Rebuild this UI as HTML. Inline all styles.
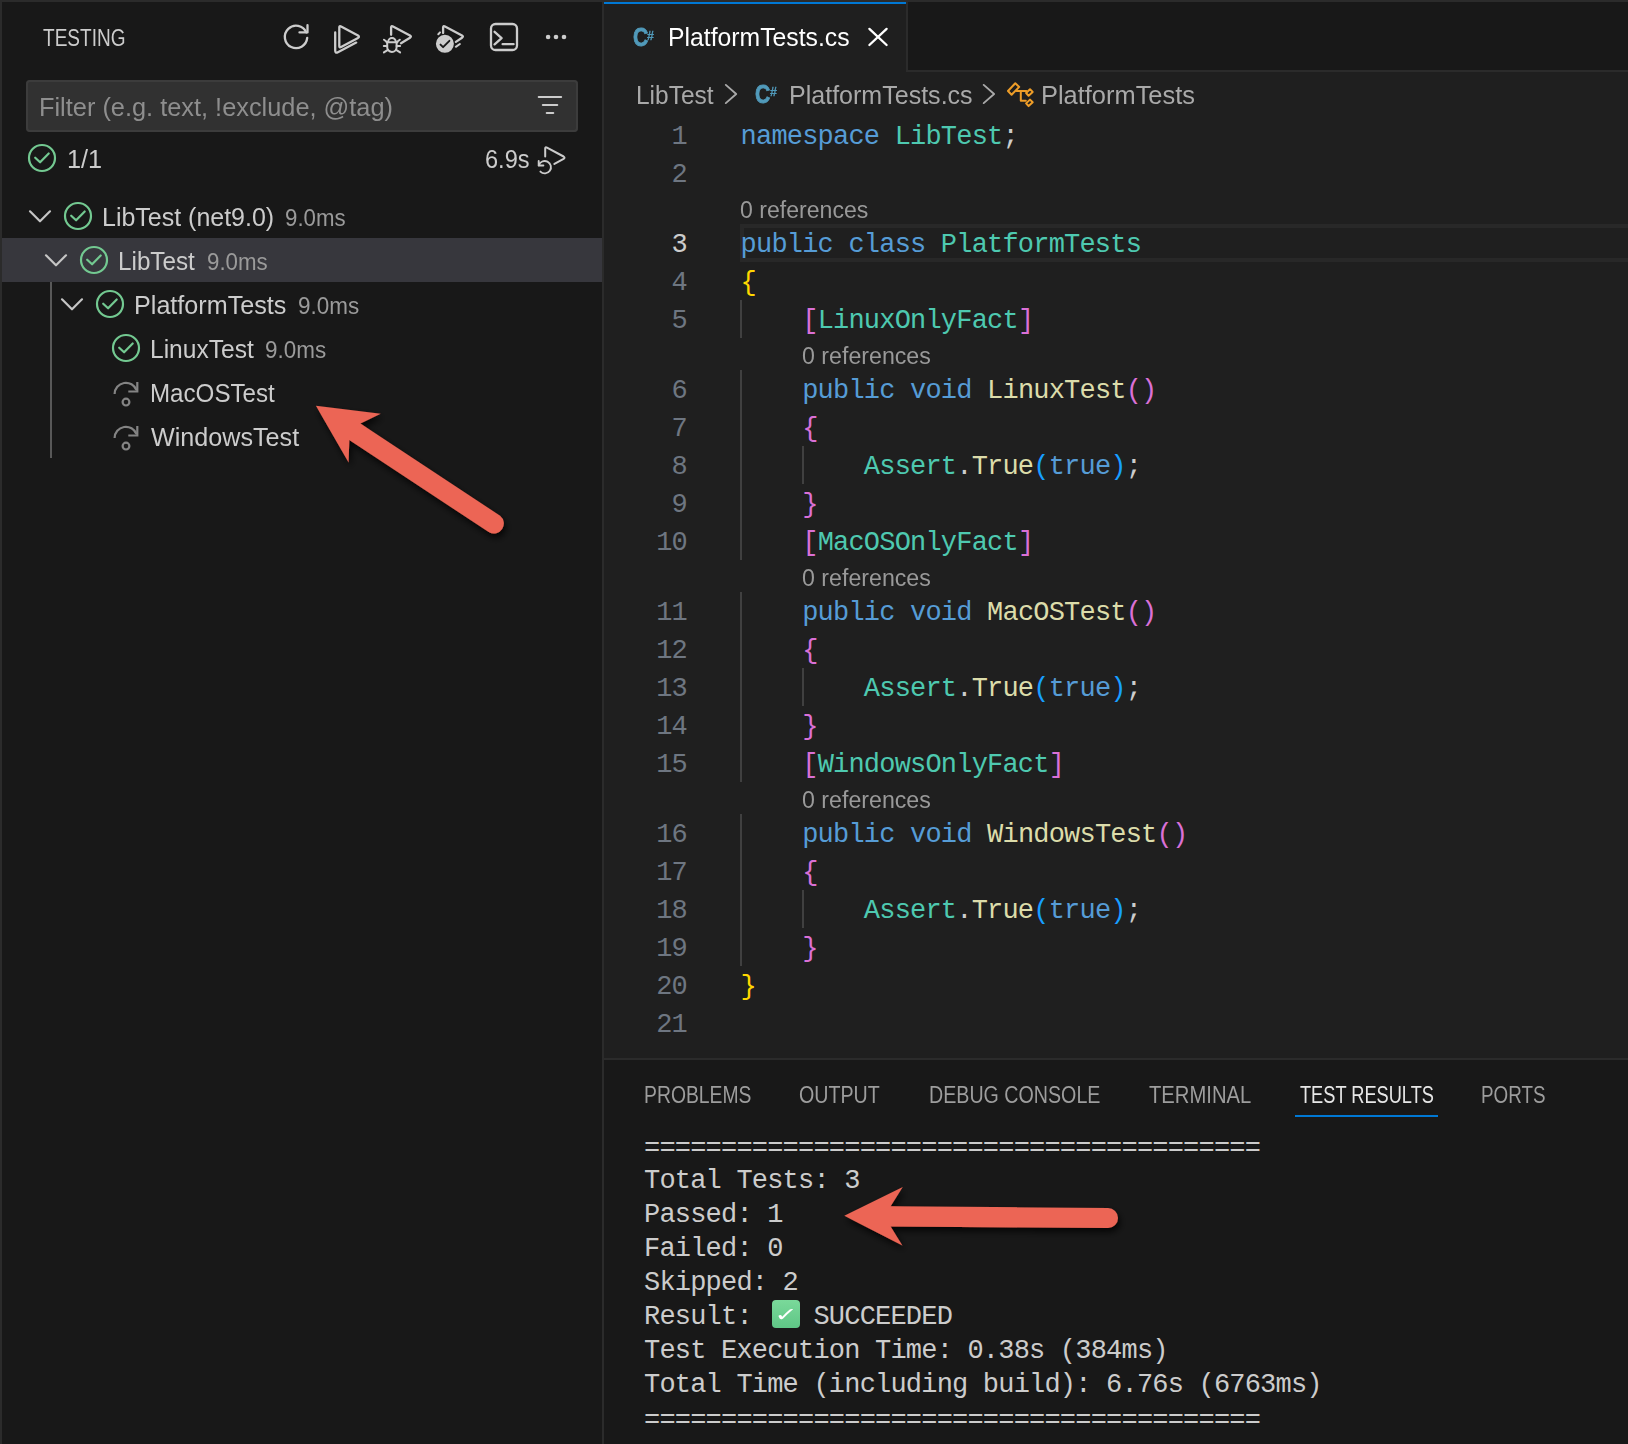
<!DOCTYPE html>
<html lang="en"><head><meta charset="utf-8"><title>Testing - PlatformTests.cs</title>
<style>
html,body{margin:0;padding:0}
body{width:1628px;height:1444px;background:#181818;position:relative;overflow:hidden;font-family:"Liberation Sans",sans-serif;}
div,span.t,svg{position:absolute}
.t{white-space:pre;display:block;transform-origin:0 0}
#bg-top{left:0;top:0;width:1628px;height:2px;background:#2b2b2b}
#bg-left{left:0;top:0;width:2px;height:1444px;background:#2b2b2b}
#sb-border{left:602px;top:2px;width:2px;height:1442px;background:#2b2b2b}
#filter{left:26px;top:80px;width:552px;height:52px;background:#313131;border-radius:4px;box-shadow:inset 0 0 0 2px #3c3c3c}
#rowsel{left:2px;top:238px;width:600px;height:44px;background:#37373d}
#guide{left:50px;top:282px;width:2px;height:176px;background:#585858}
#tabbar{left:604px;top:2px;width:1024px;height:68px;background:#181818;border-bottom:2px solid #2b2b2b}
#tab{left:604px;top:2px;width:302px;height:70px;background:#1f1f1f;border-right:2px solid #2b2b2b;box-sizing:content-box}
#tabtop{left:604px;top:2px;width:302px;height:2px;background:#0078d4}
#editor{left:604px;top:72px;width:1024px;height:986px;background:#1f1f1f}
#curline{left:740px;top:224px;width:888px;height:38px;box-sizing:border-box;border:4px solid #282828;border-right:none}
#panel-border{left:604px;top:1058px;width:1024px;height:2px;background:#2b2b2b}
#tr-underline{left:1295px;top:1115px;width:143px;height:2px;background:#0078d4}
.ig{width:2px;background:#404040}
#code, #term, #uitext{left:0;top:0}
.ln{margin-top:2px;left:604px;width:83px;text-align:right;height:38px;line-height:38px;font-family:"Liberation Mono",monospace;font-size:27px;letter-spacing:-0.8px;color:#6e7681}
.ln.act{color:#cccccc}
.cl{margin-top:2px;left:740.6px;height:38px;line-height:38px;font-family:"Liberation Mono",monospace;font-size:27px;letter-spacing:-0.8px;color:#cccccc;white-space:pre}
.k{color:#569cd6}.ty{color:#4ec9b0}.f{color:#dcdcaa}.b1{color:#ffd700}.b2{color:#da70d6}.b3{color:#179fff}
.tl{left:644px;height:34px;line-height:34px;font-family:"Liberation Mono",monospace;font-size:27px;letter-spacing:-0.8px;color:#cccccc;white-space:pre}
.emo{display:inline-block;position:relative;width:30.8px;height:34px;vertical-align:top;letter-spacing:0}
.emo i{position:absolute;left:5px;top:0.5px;width:28px;height:28px;border-radius:4px;background:linear-gradient(#7ad99a,#5fc686);color:#fff;font-style:normal;font-family:"DejaVu Sans",sans-serif;font-size:19px;line-height:29px;text-align:center}
.emo i b{display:inline-block;font-weight:normal;transform:scaleX(1.45)}
.csC{font:bold 25.5px/28px "Liberation Sans",sans-serif;color:#519aba;-webkit-text-stroke:0.8px #519aba;transform:scaleX(0.83)}
.csH{font:bold 13.4px/16px "Liberation Sans",sans-serif;color:#519aba;-webkit-text-stroke:0.3px #519aba;transform:scaleX(0.93)}

</style></head><body>
<div id="bg-top"></div><div id="bg-left"></div>
<div id="sb-border"></div>
<div id="filter"></div>
<div id="rowsel"></div>
<div id="guide"></div>
<div id="tabbar"></div>
<div id="editor"></div>
<div id="tab"></div><div id="tabtop"></div>
<div id="curline"></div>
<div id="panel-border"></div>
<div id="tr-underline"></div>
<!-- indent guides -->
<div class="ig" style="left:740px;top:300px;height:38px"></div>
<div class="ig" style="left:740px;top:370px;height:190px"></div>
<div class="ig" style="left:740px;top:592px;height:190px"></div>
<div class="ig" style="left:740px;top:814px;height:152px"></div>
<div class="ig" style="left:802px;top:446px;height:38px"></div>
<div class="ig" style="left:802px;top:668px;height:38px"></div>
<div class="ig" style="left:802px;top:890px;height:38px"></div>
<!-- file icons as text -->
<span class="t csC" style="left:632.5px;top:22.6px">C</span><span class="t csH" style="left:647.2px;top:27.5px">#</span>
<span class="t csC" style="left:754.8px;top:79.5px">C</span><span class="t csH" style="left:769.5px;top:84.4px">#</span>
<svg id="icons" width="1628" height="1444" viewBox="0 0 1628 1444" style="left:0;top:0" fill="none" stroke-linecap="round" stroke-linejoin="round">
<defs>
 <g id="pass" stroke="#73c991" stroke-width="2.2"><circle cx="0" cy="0" r="13"/><path d="M-6.8 -0.3 L-1.9 4.3 L6.7 -4.5"/></g>
 <g id="chev" stroke="#c5c5c5" stroke-width="2.2"><path d="M-10 -5 L0 5 L10 -5"/></g>
 <g id="skip" stroke="#848484" stroke-width="2.2" stroke-linecap="butt" stroke-linejoin="miter"><path d="M-11.3 2 A11.3 11.3 0 0 1 10.6 -1.8"/><path d="M2.4 -0.5 H11.4 V-9.9"/><circle cx="0.1" cy="10.1" r="3.4"/></g>
 <g id="bchev" stroke="#a9a9a9" stroke-width="1.9"><path d="M-5.2 -9.1 L5.2 0 L-5.2 9.1"/></g>
</defs>
<!-- header actions -->
<g stroke="#cccccc" stroke-width="2.3">
 <path d="M307.2 37.9 A11.2 11.2 0 1 1 306.3 32.4"/><path d="M299.5 32.4 H307.5 V25.2"/>
 <!-- run all -->
 <path d="M339.3 27.4 Q339.3 25.4 341.1 26.4 L358 35.5 Q359.8 36.7 358 37.9 L341.1 47 Q339.3 48 339.3 46 Z"/>
 <path d="M335.2 32.4 V50.5 Q335.2 53.6 337.9 52.2 L356.2 42.6"/>
 <!-- debug all -->
 <path d="M391.1 34.8 V27.6 Q391.1 25.4 393 26.4 L410 35.5 Q411.8 36.6 410 37.7 L401 43.2"/>
 <g stroke-width="2">
 <path d="M388.2 41.8 A3.8 3.8 0 0 1 395.8 41.8"/>
 <path d="M386.6 42.2 H397.4"/>
 <path d="M387.2 42.2 V47.2 A4.7 4.7 0 0 0 396.6 47.2 V42.2"/>
 <path d="M384 39.7 L387 42 M399.8 39.7 L396.8 42 M383.8 45.9 H387.2 M396.6 45.9 H400.1 M383.9 52.4 L387.9 49.8 M400.1 52.4 L396.1 49.8"/>
 </g>
 <!-- coverage -->
 <path d="M443.1 33 V27.6 Q443.1 25.4 445 26.4 L462 35.5 Q463.8 36.6 462 37.7 L455.9 41.9"/>
 <path d="M438.3 34.2 L440 32.4 M455.8 46.8 L459.9 44" stroke-width="2"/>
 <circle cx="444.9" cy="43.8" r="8" fill="#cccccc" stroke-width="2"/>
 <path d="M440.5 44.6 L443.1 47.2 L449.4 40.8" stroke="#181818" stroke-width="1.9"/>
 <!-- terminal -->
 <rect x="491" y="24" width="26" height="26" rx="4.5"/>
 <path d="M494.6 31.8 L501.6 38.1 L494.6 44.4 M502.6 44.2 H513.6"/>
</g>
<g fill="#cccccc"><circle cx="548.1" cy="37" r="2.3"/><circle cx="556" cy="37" r="2.3"/><circle cx="564" cy="37" r="2.3"/></g>
<!-- filter icon -->
<g stroke="#cccccc" stroke-width="2.2"><path d="M538.8 97 H561.1 M542.9 105 H557.2 M546.8 113 H553.2"/></g>
<!-- rerun icon -->
<g stroke="#cccccc" stroke-width="2">
 <path d="M545.2 156.5 V148.6 Q545.2 146.6 547 147.6 L563.6 156.5 Q565.4 157.7 563.6 158.9 L554.4 163.9"/>
 <path d="M538.8 165.4 A6.2 6.2 0 1 1 540.4 171.6" stroke-width="1.9"/>
 <path d="M538.7 160.9 V165.5 H543.4" stroke-width="1.9"/>
</g>
<!-- summary + tree icons -->
<use href="#pass" x="42" y="158"/>
<use href="#chev" x="40" y="216.3"/><use href="#pass" x="78" y="216"/>
<use href="#chev" x="56" y="260.3"/><use href="#pass" x="94" y="260"/>
<use href="#chev" x="72" y="304.3"/><use href="#pass" x="110" y="304"/>
<use href="#pass" x="126" y="348"/>
<use href="#skip" x="125.9" y="392"/>
<use href="#skip" x="125.9" y="436"/>
<!-- tab close -->
<path d="M869.4 28.9 L886.6 45 M886.6 28.9 L869.4 45" stroke="#ffffff" stroke-width="2.3"/>
<!-- breadcrumb chevrons -->
<use href="#bchev" x="731" y="94"/>
<use href="#bchev" x="988.9" y="94"/>
<!-- class symbol -->
<g stroke="#ee9d28" stroke-width="2" stroke-linejoin="round">
 <path d="M1015.3 83.2 L1019.2 86.9 L1011.6 94.8 L1008 91 Z"/>
 <path d="M1016.6 90.9 H1026.4 M1020.8 90.9 V100.7 H1025.8"/>
 <path d="M1030 89.2 L1032.7 91.9 L1028.6 95.7 L1026.1 93 Z"/>
 <path d="M1030 99.6 L1032.7 102.3 L1028.6 106.1 L1026.1 103.4 Z"/>
</g>
</svg>

<div id="uitext">
<span class="t" id="u0" style="left:42.91px;top:23.03px;font-size:23px;line-height:30px;color:#cccccc;transform:scaleX(0.8283);">TESTING</span>
<span class="t" id="u1" style="left:39.05px;top:89.99px;font-size:26px;line-height:34px;color:#8e8e8e;transform:scaleX(0.9750);">Filter (e.g. text, !exclude, @tag)</span>
<span class="t" id="u2" style="left:67.03px;top:141.99px;font-size:26px;line-height:34px;color:#cccccc;transform:scaleX(0.9723);">1/1</span>
<span class="t" id="u3" style="left:485.09px;top:142.19px;font-size:26px;line-height:34px;color:#cccccc;transform:scaleX(0.9064);">6.9s</span>
<span class="t" id="u4" style="left:102.04px;top:199.99px;font-size:26px;line-height:34px;color:#cccccc;transform:scaleX(0.9605);">LibTest (net9.0)</span>
<span class="t" id="u5" style="left:285.05px;top:202.89px;font-size:23.4px;line-height:30px;color:#9a9a9a;transform:scaleX(0.9516);">9.0ms</span>
<span class="t" id="u6" style="left:118.07px;top:243.99px;font-size:26px;line-height:34px;color:#cccccc;transform:scaleX(0.9330);">LibTest</span>
<span class="t" id="u7" style="left:207.02px;top:246.89px;font-size:23.4px;line-height:30px;color:#9a9a9a;transform:scaleX(0.9527);">9.0ms</span>
<span class="t" id="u8" style="left:134.03px;top:287.99px;font-size:26px;line-height:34px;color:#cccccc;transform:scaleX(0.9679);">PlatformTests</span>
<span class="t" id="u9" style="left:298.01px;top:290.89px;font-size:23.4px;line-height:30px;color:#9a9a9a;transform:scaleX(0.9605);">9.0ms</span>
<span class="t" id="u10" style="left:150.06px;top:331.99px;font-size:26px;line-height:34px;color:#cccccc;transform:scaleX(0.9450);">LinuxTest</span>
<span class="t" id="u11" style="left:265.04px;top:334.89px;font-size:23.4px;line-height:30px;color:#9a9a9a;transform:scaleX(0.9597);">9.0ms</span>
<span class="t" id="u12" style="left:150.11px;top:375.99px;font-size:26px;line-height:34px;color:#cccccc;transform:scaleX(0.9286);">MacOSTest</span>
<span class="t" id="u13" style="left:151.00px;top:419.99px;font-size:26px;line-height:34px;color:#cccccc;transform:scaleX(0.9675);">WindowsTest</span>
<span class="t" id="u14" style="left:668.07px;top:19.99px;font-size:26px;line-height:34px;color:#ffffff;transform:scaleX(0.9524);">PlatformTests.cs</span>
<span class="t" id="u15" style="left:636.11px;top:77.59px;font-size:26px;line-height:34px;color:#a9a9a9;transform:scaleX(0.9414);">LibTest</span>
<span class="t" id="u16" style="left:789.07px;top:77.59px;font-size:26px;line-height:34px;color:#a9a9a9;transform:scaleX(0.9628);">PlatformTests.cs</span>
<span class="t" id="u17" style="left:1041.03px;top:77.59px;font-size:26px;line-height:34px;color:#a9a9a9;transform:scaleX(0.9776);">PlatformTests</span>
<span class="t" id="u18" style="left:740.00px;top:194.53px;font-size:23px;line-height:30px;color:#999999;transform:scaleX(1.0040);">0 references</span>
<span class="t" id="u19" style="left:802.00px;top:340.53px;font-size:23px;line-height:30px;color:#999999;transform:scaleX(1.0079);">0 references</span>
<span class="t" id="u20" style="left:802.00px;top:562.53px;font-size:23px;line-height:30px;color:#999999;transform:scaleX(1.0079);">0 references</span>
<span class="t" id="u21" style="left:802.00px;top:784.53px;font-size:23px;line-height:30px;color:#999999;transform:scaleX(1.0079);">0 references</span>
<span class="t" id="u22" style="left:644.16px;top:1080.03px;font-size:23px;line-height:30px;color:#9d9d9d;transform:scaleX(0.8413);">PROBLEMS</span>
<span class="t" id="u23" style="left:799.45px;top:1080.03px;font-size:23px;line-height:30px;color:#9d9d9d;transform:scaleX(0.8544);">OUTPUT</span>
<span class="t" id="u24" style="left:929.15px;top:1080.03px;font-size:23px;line-height:30px;color:#9d9d9d;transform:scaleX(0.8543);">DEBUG CONSOLE</span>
<span class="t" id="u25" style="left:1149.00px;top:1080.03px;font-size:23px;line-height:30px;color:#9d9d9d;transform:scaleX(0.8793);">TERMINAL</span>
<span class="t" id="u26" style="left:1300.00px;top:1080.03px;font-size:23px;line-height:30px;color:#e7e7e7;transform:scaleX(0.7917);">TEST RESULTS</span>
<span class="t" id="u27" style="left:1481.18px;top:1080.03px;font-size:23px;line-height:30px;color:#9d9d9d;transform:scaleX(0.8182);">PORTS</span>
</div>
<div id="code">
<div class="ln" style="top:116px">1</div>
<div class="cl" style="top:116px"><span class="k">namespace</span> <span class="ty">LibTest</span><span class="p">;</span></div>
<div class="ln" style="top:154px">2</div>
<div class="ln act" style="top:224px">3</div>
<div class="cl" style="top:224px"><span class="k">public</span> <span class="k">class</span> <span class="ty">PlatformTests</span></div>
<div class="ln" style="top:262px">4</div>
<div class="cl" style="top:262px"><span class="b1">{</span></div>
<div class="ln" style="top:300px">5</div>
<div class="cl" style="top:300px">    <span class="b2">[</span><span class="ty">LinuxOnlyFact</span><span class="b2">]</span></div>
<div class="ln" style="top:370px">6</div>
<div class="cl" style="top:370px">    <span class="k">public</span> <span class="k">void</span> <span class="f">LinuxTest</span><span class="b2">()</span></div>
<div class="ln" style="top:408px">7</div>
<div class="cl" style="top:408px">    <span class="b2">{</span></div>
<div class="ln" style="top:446px">8</div>
<div class="cl" style="top:446px">        <span class="ty">Assert</span><span class="p">.</span><span class="f">True</span><span class="b3">(</span><span class="k">true</span><span class="b3">)</span><span class="p">;</span></div>
<div class="ln" style="top:484px">9</div>
<div class="cl" style="top:484px">    <span class="b2">}</span></div>
<div class="ln" style="top:522px">10</div>
<div class="cl" style="top:522px">    <span class="b2">[</span><span class="ty">MacOSOnlyFact</span><span class="b2">]</span></div>
<div class="ln" style="top:592px">11</div>
<div class="cl" style="top:592px">    <span class="k">public</span> <span class="k">void</span> <span class="f">MacOSTest</span><span class="b2">()</span></div>
<div class="ln" style="top:630px">12</div>
<div class="cl" style="top:630px">    <span class="b2">{</span></div>
<div class="ln" style="top:668px">13</div>
<div class="cl" style="top:668px">        <span class="ty">Assert</span><span class="p">.</span><span class="f">True</span><span class="b3">(</span><span class="k">true</span><span class="b3">)</span><span class="p">;</span></div>
<div class="ln" style="top:706px">14</div>
<div class="cl" style="top:706px">    <span class="b2">}</span></div>
<div class="ln" style="top:744px">15</div>
<div class="cl" style="top:744px">    <span class="b2">[</span><span class="ty">WindowsOnlyFact</span><span class="b2">]</span></div>
<div class="ln" style="top:814px">16</div>
<div class="cl" style="top:814px">    <span class="k">public</span> <span class="k">void</span> <span class="f">WindowsTest</span><span class="b2">()</span></div>
<div class="ln" style="top:852px">17</div>
<div class="cl" style="top:852px">    <span class="b2">{</span></div>
<div class="ln" style="top:890px">18</div>
<div class="cl" style="top:890px">        <span class="ty">Assert</span><span class="p">.</span><span class="f">True</span><span class="b3">(</span><span class="k">true</span><span class="b3">)</span><span class="p">;</span></div>
<div class="ln" style="top:928px">19</div>
<div class="cl" style="top:928px">    <span class="b2">}</span></div>
<div class="ln" style="top:966px">20</div>
<div class="cl" style="top:966px"><span class="b1">}</span></div>
<div class="ln" style="top:1004px">21</div>
</div>
<div id="term">
<div class="tl" style="top:1131.5px">========================================</div>
<div class="tl" style="top:1163.5px">Total Tests: 3</div>
<div class="tl" style="top:1197.5px">Passed: 1</div>
<div class="tl" style="top:1231.5px">Failed: 0</div>
<div class="tl" style="top:1265.5px">Skipped: 2</div>
<div class="tl" style="top:1299.5px">Result: <span class="emo"><i><b>✓</b></i></span> SUCCEEDED</div>
<div class="tl" style="top:1333.5px">Test Execution Time: 0.38s (384ms)</div>
<div class="tl" style="top:1367.5px">Total Time (including build): 6.76s (6763ms)</div>
<div class="tl" style="top:1403.5px">========================================</div>
</div>
<svg id="arrows" width="1628" height="1444" viewBox="0 0 1628 1444" style="left:0;top:0">
<defs><filter id="ds" x="-20%" y="-20%" width="140%" height="150%"><feGaussianBlur in="SourceAlpha" stdDeviation="3.5"/><feOffset dx="2" dy="4"/><feComponentTransfer><feFuncA type="linear" slope="0.8"/></feComponentTransfer><feMerge><feMergeNode/><feMergeNode in="SourceGraphic"/></feMerge></filter></defs>
<g filter="url(#ds)" fill="#ec6554" stroke="none">
 <path d="M315.9 405.7 L380.8 413.8 L360.4 423.5 L500.1 515.7 A10 10 0 0 1 489.1 532.3 L349.3 440.1 L348.6 462.4 Z"/>
</g>
<g filter="url(#ds)" fill="#ec6554" stroke="none">
 <path d="M844.3 1215.7 L902.8 1187.1 L890.6 1206.2 L1108 1208 A10 10 0 0 1 1108 1228 L890.6 1226.6 L902.4 1245.6 Z"/>
</g>
</svg>

</body></html>
